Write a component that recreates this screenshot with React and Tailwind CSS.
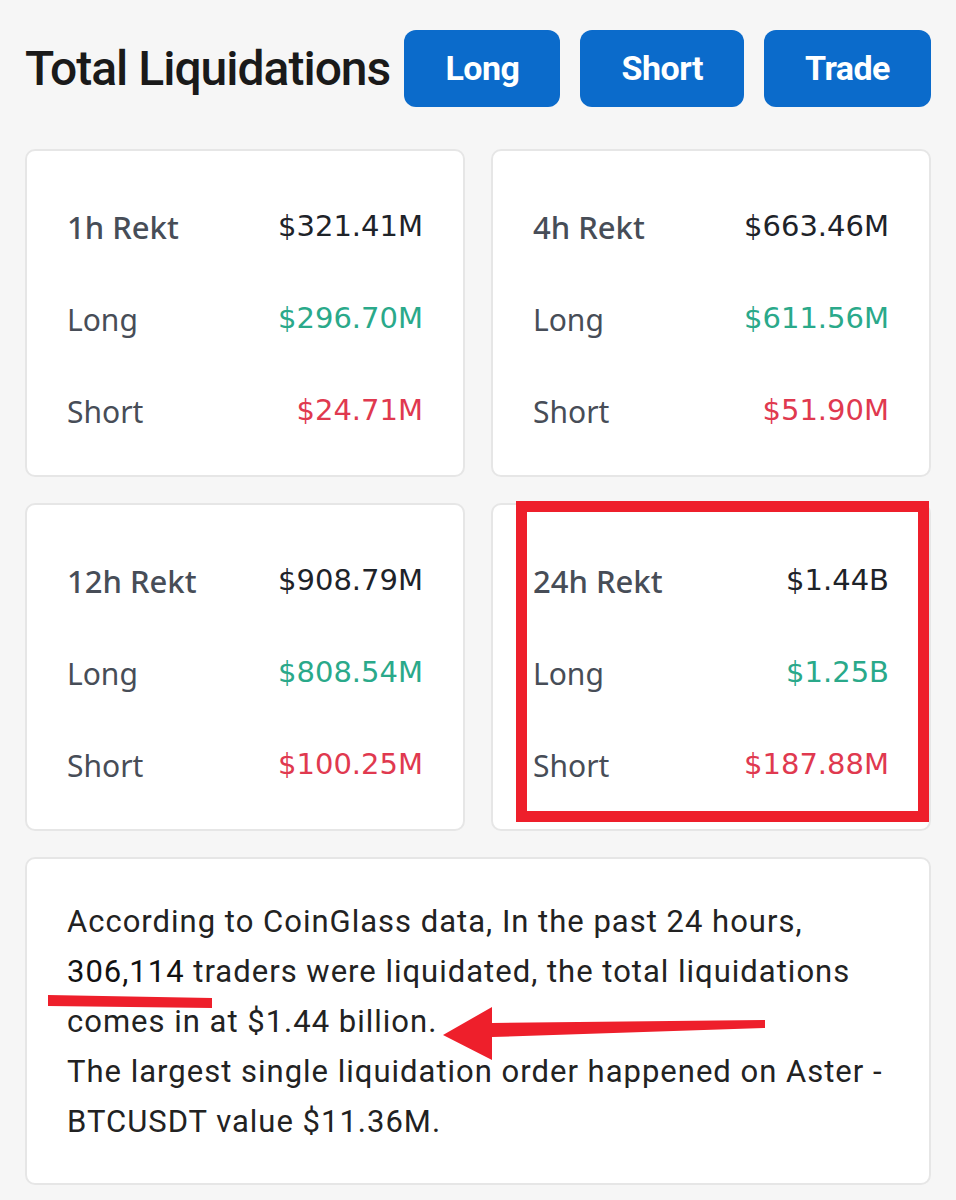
import React from "react";

const cards = [
  { t: "1h Rekt", total: "$321.41M", long: "$296.70M", short: "$24.71M" },
  { t: "4h Rekt", total: "$663.46M", long: "$611.56M", short: "$51.90M" },
  { t: "12h Rekt", total: "$908.79M", long: "$808.54M", short: "$100.25M" },
  { t: "24h Rekt", total: "$1.44B", long: "$1.25B", short: "$187.88M", hl: true },
];

function Card({ c }) {
  return (
    <div className="relative h-[328px] rounded-[10px] border-2 border-[#e6e6e6] bg-white pl-[40px] pr-[40px] pt-[56px]">
      <div className="flex flex-col gap-[52px]">
        <div className="flex h-[40px] items-center justify-between">
          <span className="font-['Noto_Sans',sans-serif] text-[31px] font-medium text-[#474d57]">{c.t}</span>
          <span className="font-['DejaVu_Sans',sans-serif] text-[29px] text-[#1e2329]">{c.total}</span>
        </div>
        <div className="flex h-[40px] items-center justify-between">
          <span className="font-['Noto_Sans',sans-serif] text-[30px] text-[#474d57]">Long</span>
          <span className="font-['DejaVu_Sans',sans-serif] text-[29px] text-[#2aa98a]">{c.long}</span>
        </div>
        <div className="flex h-[40px] items-center justify-between">
          <span className="font-['Noto_Sans',sans-serif] text-[30px] text-[#474d57]">Short</span>
          <span className="font-['DejaVu_Sans',sans-serif] text-[29px] text-[#e0394f]">{c.short}</span>
        </div>
      </div>
      {c.hl && (
        <div className="pointer-events-none absolute left-[23px] top-[-4px] h-[321px] w-[413px] border-[11px] border-[#ee1f2b]" />
      )}
    </div>
  );
}

export default function App() {
  return (
    <div className="min-h-[1200px] w-[956px] bg-[#f6f6f6] px-[25px] pt-[30px] font-['Roboto',sans-serif]">
      <div className="flex h-[77px] items-center justify-between">
        <h1 className="font-['Roboto',sans-serif] text-[48px] font-medium tracking-[-1px] text-[#1a1a1a]">
          Total Liquidations
        </h1>
        <div className="flex gap-[20px]">
          {["Long", "Short", "Trade"].map((b) => (
            <button
              key={b}
              className="flex h-[77px] items-center rounded-[12px] bg-[#0b6bcb] px-[41px] font-['Roboto',sans-serif] text-[34px] font-bold tracking-[-0.5px] text-white"
            >
              {b}
            </button>
          ))}
        </div>
      </div>

      <div className="mt-[42px] grid grid-cols-2 gap-[26px]">
        {cards.map((c) => (
          <Card key={c.t} c={c} />
        ))}
      </div>

      <div className="relative mt-[26px] h-[328px] rounded-[10px] border-2 border-[#e6e6e6] bg-white pl-[40px] pt-[38px] font-['Roboto',sans-serif] text-[31px] leading-[50px] tracking-[1px] text-[#222]">
        <div className="whitespace-nowrap">According to CoinGlass data, In the past 24 hours,</div>
        <div className="whitespace-nowrap">
          <span className="text-[#111]">306,114</span> traders were liquidated, the total liquidations
        </div>
        <div className="whitespace-nowrap">comes in at $1.44 billion.</div>
        <div className="whitespace-nowrap">The largest single liquidation order happened on Aster -</div>
        <div className="whitespace-nowrap">BTCUSDT value $11.36M.</div>
        <svg
          className="pointer-events-none absolute left-[-2px] top-[-2px]"
          width="906"
          height="328"
          viewBox="0 0 906 328"
        >
          <polygon points="23,138 187,141 187,151 23,149" fill="#ee1f2b" />
          <polygon
            points="418,178 467,150 467,166 740,163 740,171 467,180 467,203"
            fill="#ee1f2b"
          />
        </svg>
      </div>
    </div>
  );
}
